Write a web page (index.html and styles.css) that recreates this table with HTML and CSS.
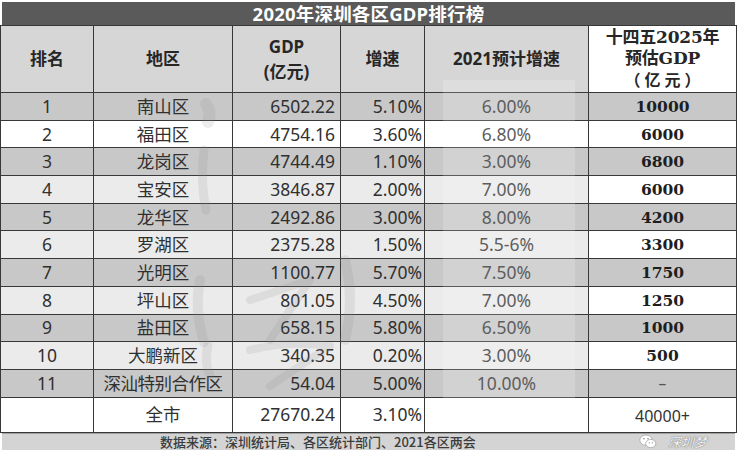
FILE: index.html
```html
<!DOCTYPE html>
<html lang="zh-CN">
<head>
<meta charset="utf-8">
<title>2020年深圳各区GDP排行榜</title>
<link rel="stylesheet" href="styles.css">
</head>
<body>
<div class="page">
  <div class="title">2020年深圳各区GDP排行榜</div>
  <table class="gdp">
    <colgroup>
      <col class="c1"><col class="c2"><col class="c3"><col class="c4"><col class="c5"><col class="c6">
    </colgroup>
    <thead>
      <tr class="head">
        <th>排名</th>
        <th>地区</th>
        <th class="gdp-h">GDP<br>(亿元)</th>
        <th>增速</th>
        <th>2021预计增速</th>
        <th class="plan">十四五2025年<br>预估GDP<br><span class="fw">（亿元）</span></th>
      </tr>
    </thead>
    <tbody>
      <tr class="odd"><td>1</td><td>南山区</td><td class="num">6502.22</td><td class="pct">5.10%</td><td class="fc">6.00%</td><td class="plan">10000</td></tr>
      <tr class="white"><td>2</td><td>福田区</td><td class="num">4754.16</td><td class="pct">3.60%</td><td class="fc">6.80%</td><td class="plan">6000</td></tr>
      <tr class="odd"><td>3</td><td>龙岗区</td><td class="num">4744.49</td><td class="pct">1.10%</td><td class="fc">3.00%</td><td class="plan">6800</td></tr>
      <tr class="even"><td>4</td><td>宝安区</td><td class="num">3846.87</td><td class="pct">2.00%</td><td class="fc">7.00%</td><td class="plan">6000</td></tr>
      <tr class="odd"><td>5</td><td>龙华区</td><td class="num">2492.86</td><td class="pct">3.00%</td><td class="fc">8.00%</td><td class="plan">4200</td></tr>
      <tr class="even"><td>6</td><td>罗湖区</td><td class="num">2375.28</td><td class="pct">1.50%</td><td class="fc">5.5-6%</td><td class="plan">3300</td></tr>
      <tr class="odd"><td>7</td><td>光明区</td><td class="num">1100.77</td><td class="pct">5.70%</td><td class="fc">7.50%</td><td class="plan">1750</td></tr>
      <tr class="even"><td>8</td><td>坪山区</td><td class="num">801.05</td><td class="pct">4.50%</td><td class="fc">7.00%</td><td class="plan">1250</td></tr>
      <tr class="odd"><td>9</td><td>盐田区</td><td class="num">658.15</td><td class="pct">5.80%</td><td class="fc">6.50%</td><td class="plan">1000</td></tr>
      <tr class="even"><td>10</td><td>大鹏新区</td><td class="num">340.35</td><td class="pct">0.20%</td><td class="fc">3.00%</td><td class="plan">500</td></tr>
      <tr class="odd"><td>11</td><td class="tight">深汕特别合作区</td><td class="num">54.04</td><td class="pct">5.00%</td><td class="fc">10.00%</td><td class="plan dash">–</td></tr>
      <tr class="total"><td></td><td>全市</td><td class="num">27670.24</td><td class="pct">3.10%</td><td></td><td class="sum">40000+</td></tr>
    </tbody>
  </table>
  <div class="footer">
    <span class="src">数据来源：深圳统计局、各区统计部门、2021各区两会</span>
    <span class="wm">
      <svg class="wx" viewBox="0 0 26 22" width="26" height="22" aria-hidden="true">
        <ellipse cx="10" cy="9" rx="9" ry="7.5" fill="#ffffff" stroke="#9a9a9a" stroke-width="1"/>
        <ellipse cx="17" cy="14" rx="7.5" ry="6" fill="#ffffff" stroke="#9a9a9a" stroke-width="1"/>
        <circle cx="7" cy="7" r="1.2" fill="#8a8a8a"/>
        <circle cx="13" cy="7" r="1.2" fill="#8a8a8a"/>
        <circle cx="15" cy="13" r="1" fill="#8a8a8a"/>
        <circle cx="19.5" cy="13" r="1" fill="#8a8a8a"/>
      </svg>
      <span class="wm-text">深圳梦</span>
    </span>
  </div>
  <svg class="brush" viewBox="0 0 740 450" width="740" height="450" aria-hidden="true">
    <rect x="443" y="80" width="132" height="325" fill="#ffffff" fill-opacity="0.18"/>
    <g fill="none" stroke="#8c8c8c" stroke-opacity="0.16" stroke-linecap="round" stroke-linejoin="round">
      <path d="M206 104 q6 8 2 18" stroke-width="12"/>
      <path d="M204 150 q-4 30 2 60" stroke-width="9"/>
      <path d="M200 280 q-6 30 4 62" stroke-width="10"/>
      <path d="M250 300 q30 -10 60 -20 q-20 30 -40 60" stroke-width="8"/>
      <path d="M208 345 q-4 20 2 30" stroke-width="9"/>
      <path d="M250 350 q40 -10 80 -4 q-30 20 -60 40" stroke-width="8"/>
      <path d="M345 260 q10 40 0 80" stroke-width="10"/>
    </g>
  </svg>
</div>
</body>
</html>
```

FILE: styles.css
```css
html, body {
  margin: 0;
  padding: 0;
  background: #ffffff;
}

.page {
  position: relative;
  width: 740px;
  height: 450px;
  overflow: hidden;
  padding-top: 2px;
  box-sizing: border-box;
  font-family: "Noto Sans", "Noto Sans CJK SC", sans-serif;
  color: #303030;
}

.title {
  margin-left: 2px;
  width: 733px;
  height: 23px;
  background: #5a5a5a;
  color: #ffffff;
  font-weight: 700;
  font-size: 18.5px;
  line-height: 23px;
  text-align: center;
  letter-spacing: 0.2px;
}

.gdp {
  width: 736px;
  table-layout: fixed;
  border-collapse: collapse;
  font-size: 17.5px;
}

.c1 { width: 93px; }
.c2 { width: 139px; }
.c3 { width: 108px; }
.c4 { width: 84px; }
.c5 { width: 164px; }
.c6 { width: 148px; }

.gdp th,
.gdp td {
  border: 1.5px solid #383838;
  padding: 0;
  text-align: center;
  vertical-align: middle;
  white-space: nowrap;
  line-height: 24px;
}

.head th {
  height: 66px;
  background: #d6d6d6;
  font-weight: 700;
  font-size: 17px;
  color: #262626;
}

.head .gdp-h {
  line-height: 25px;
}

.head .plan {
  background: #ffffff;
  font-family: "DejaVu Serif", "Noto Sans CJK SC", serif;
  font-size: 17px;
  line-height: 21px;
  font-weight: 700;
  letter-spacing: -0.2px;
}

.head .plan .fw {
  font-family: "Noto Sans CJK SC", sans-serif;
  font-size: 16px;
  letter-spacing: 4px;
  margin-right: -4px;
}

.gdp tbody tr {
  height: 27.7px;
}

.gdp tbody td {
  padding-top: 0;
  padding-bottom: 0;
  line-height: 25px;
}

.odd td { background: #c8c8c8; }
.even td { background: #ebebeb; }
.white td { background: #ffffff; }
.even td.plan { background: #ffffff; }

.gdp td.fc {
  color: #3a3a3a;
}

.gdp td.num {
  text-align: right;
  padding-right: 5px;
}

.gdp td.pct {
  text-align: right;
  padding-right: 2px;
}

.gdp td.tight {
  letter-spacing: -0.5px;
}

.gdp td.plan {
  font-family: "DejaVu Serif", "Liberation Serif", serif;
  font-weight: 700;
  font-size: 15.5px;
  color: #1e1e1e;
}

.gdp td.dash {
  font-family: "Noto Sans", sans-serif;
  font-weight: 400;
  color: #555555;
}

.gdp tr.total {
  height: 35px;
}

.total td {
  background: #ffffff;
}

.gdp td.sum {
  font-size: 16px;
  padding-top: 3px;
  color: #333333;
}

.footer {
  margin-left: 2px;
  width: 733px;
  height: 17px;
  background: #d4d4d4;
  border-top: 1.5px solid #a0a0a0;
  display: flex;
  align-items: flex-start;
  box-sizing: border-box;
  overflow: hidden;
}

.src {
  margin-left: 158px;
  padding-top: 1px;
  font-family: "Noto Sans CJK SC", sans-serif;
  font-size: 13px;
  line-height: 13px;
  color: #3c3c3c;
  font-weight: 500;
}

.wm {
  margin-left: auto;
  margin-right: 28px;
  display: flex;
  align-items: center;
  gap: 8px;
}

.wx {
  display: block;
  width: 24px;
  height: 15px;
}

.wm-text {
  font-family: "Noto Sans CJK SC", sans-serif;
  font-size: 13px;
  line-height: 15px;
  color: #f4f4f4;
  text-shadow: 0 0 1px #7a7a7a, 0 0 1px #7a7a7a;
  font-style: italic;
}

.brush {
  position: absolute;
  left: 0;
  top: 0;
  pointer-events: none;
}
```
